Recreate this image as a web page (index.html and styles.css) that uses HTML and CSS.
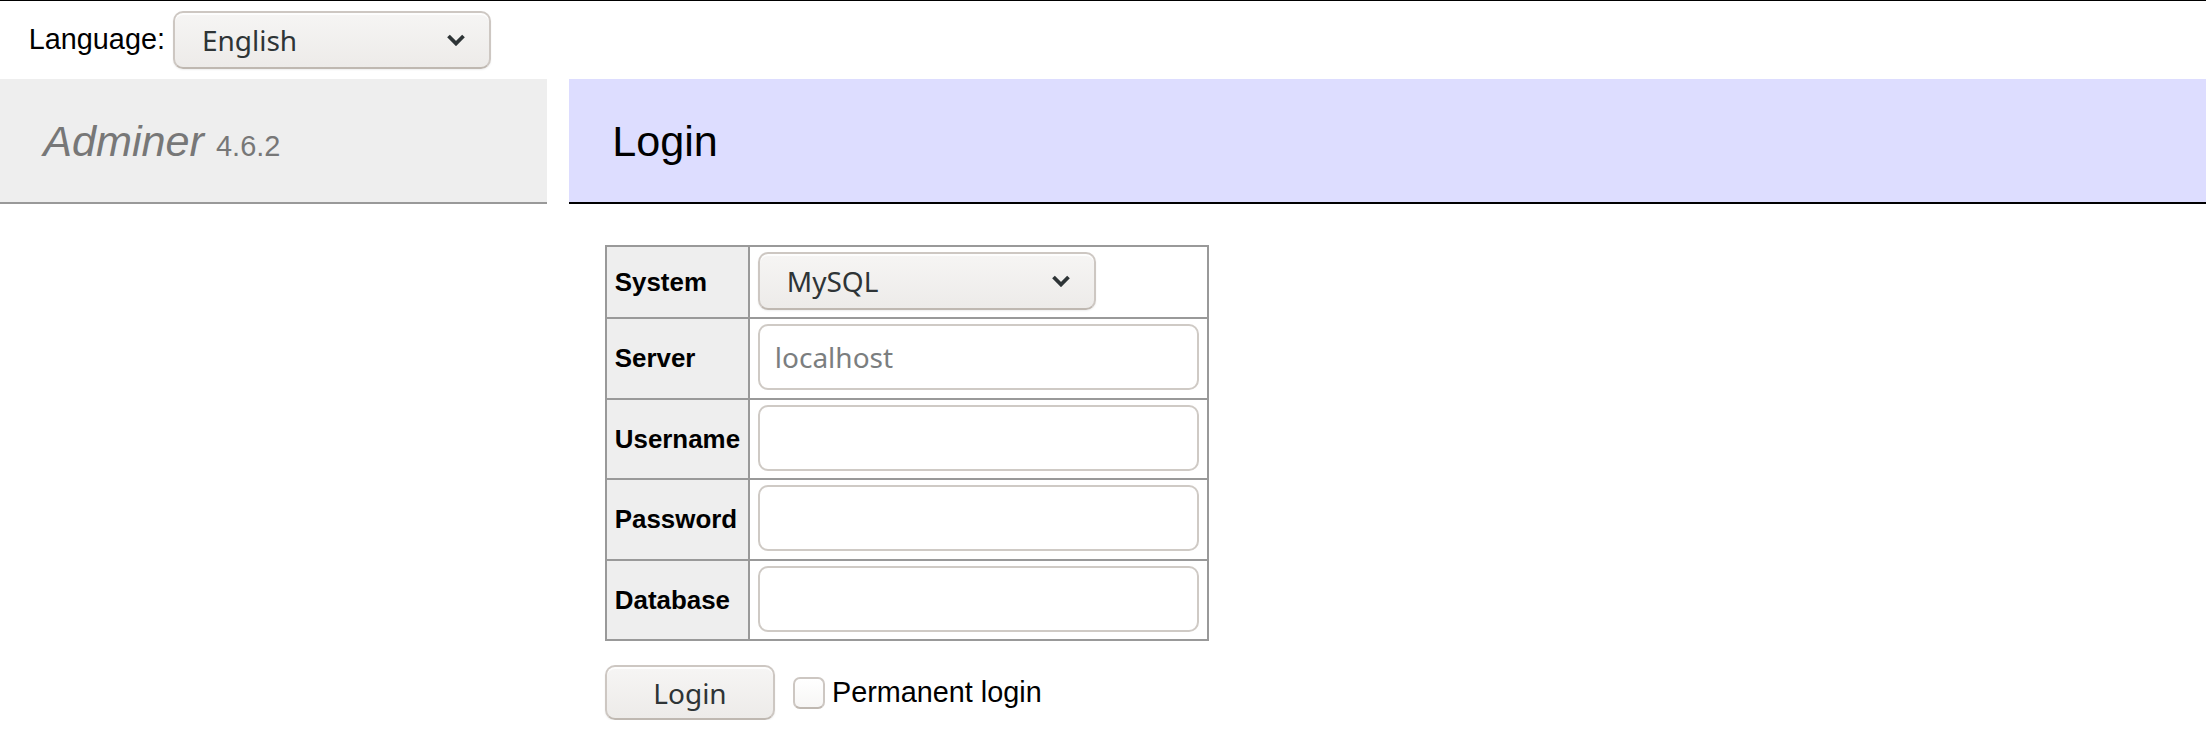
FILE: index.html
```html
<!DOCTYPE html>
<html lang="en">
<head>
<meta charset="utf-8">
<title>Login - Adminer</title>
<link rel="stylesheet" href="styles.css">
</head>
<body>
<div class="lang">
  <span class="lang-label">Language:</span>
  <span class="select-wrap select-lang">
    <select class="select"><option>English</option></select>
    <svg class="chevron" width="20" height="12" viewBox="0 0 20 12"><path d="M2.5 2 L10 9.5 L17.5 2"/></svg>
  </span>
</div>
<div class="main">
  <div class="menu">
    <h1><a class="brand" href="#">Adminer</a> <span class="version">4.6.2</span></h1>
  </div>
  <div class="content">
    <h2>Login</h2>
    <form class="login">
      <table class="layout">
        <tr>
          <th>System</th>
          <td class="cell-select">
            <span class="select-wrap select-system">
              <select class="select"><option>MySQL</option></select>
              <svg class="chevron" width="20" height="12" viewBox="0 0 20 12"><path d="M2.5 2 L10 9.5 L17.5 2"/></svg>
            </span>
          </td>
        </tr>
        <tr><th>Server</th><td><input class="field" type="text" placeholder="localhost"></td></tr>
        <tr><th>Username</th><td><input class="field" type="text"></td></tr>
        <tr><th>Password</th><td><input class="field" type="password"></td></tr>
        <tr><th>Database</th><td><input class="field" type="text"></td></tr>
      </table>
      <p class="actions">
        <input class="button" type="submit" value="Login">
        <label class="perm"><input class="check" type="checkbox">Permanent login</label>
      </p>
    </form>
  </div>
</div>
</body>
</html>
```

FILE: styles.css
```css
html, body {
  background: #fff;
}
body {
  margin: 0;
  border-top: 1px solid #000;
  color: #000;
  font-family: "Liberation Sans", Arial, sans-serif;
  font-size: 28.8px;
  line-height: 1.25;
}

.lang {
  height: 78px;
  box-sizing: border-box;
  padding: 10px 28.8px 0;
  display: flex;
  align-items: flex-start;
  gap: 8px;
}
.lang-label {
  height: 58px;
  display: flex;
  align-items: center;
}

.select-wrap {
  position: relative;
  display: block;
  width: fit-content;
}
.select {
  -webkit-appearance: none;
  appearance: none;
  display: block;
  margin: 0;
  height: 58px;
  box-sizing: border-box;
  padding: 0 0 0 27px;
  border: 2px solid #cdc7c2;
  border-bottom-color: #bfb8b1;
  border-radius: 10px;
  background: linear-gradient(to bottom, #f6f5f4, #edebe9);
  box-shadow: inset 0 2px 0 rgba(255, 255, 255, 0.8), 0 1px 2px rgba(0, 0, 0, 0.07);
  color: #2e3436;
  font-family: "Noto Sans", "Open Sans", sans-serif;
  font-size: 28px;
}
.select-lang .select {
  width: 318px;
}
.select-system .select {
  width: 338px;
}
.chevron {
  position: absolute;
  top: 50%;
  right: 25px;
  transform: translateY(-50%);
  pointer-events: none;
}
.chevron path {
  fill: none;
  stroke: #2e3436;
  stroke-width: 3.8;
}

.main {
  display: flex;
  align-items: flex-start;
}
.menu {
  width: 547px;
  flex: none;
}
h1 {
  margin: 0;
  padding: 34.56px 43.2px;
  font-size: 43.2px;
  line-height: 54px;
  font-weight: normal;
  color: #777;
  background: #eee;
  border-bottom: 2px solid #999;
}
.brand {
  color: #777;
  font-style: italic;
  text-decoration: none;
}
.version {
  color: #777;
  font-size: 67%;
  line-height: 1;
}

.content {
  flex: 1;
  margin-left: 22px;
}
h2 {
  margin: 0 0 41px;
  padding: 34.56px 43.2px;
  font-size: 43.2px;
  line-height: 54px;
  font-weight: normal;
  color: #000;
  background: #ddf;
  border-bottom: 2px solid #000;
}

.login {
  margin: 0;
  padding-left: 36px;
}
.layout {
  border-spacing: 0;
  border-top: 2px solid #999;
  border-left: 2px solid #999;
  font-size: 25.92px;
  line-height: 1.25;
}
.layout th,
.layout td {
  border-right: 2px solid #999;
  border-bottom: 2px solid #999;
  vertical-align: middle;
}
.layout th {
  background: #eee;
  text-align: left;
  font-weight: bold;
  padding: 0 7.78px;
}
.layout td {
  padding: 5px 8px 7.6px;
}
.layout .cell-select {
  padding-bottom: 7px;
}

.field {
  display: block;
  margin: 0;
  width: 441px;
  height: 66px;
  box-sizing: border-box;
  padding: 0 0 0 15px;
  border: 2px solid #cfcac5;
  border-radius: 10px;
  background: #fff;
  color: #2e3436;
  font-family: "Noto Sans", "Open Sans", sans-serif;
  font-size: 28px;
  outline: none;
}
.field::placeholder {
  color: #7b7e7f;
}

.actions {
  margin: 24px 0 0;
  display: flex;
  align-items: center;
}
.button {
  -webkit-appearance: none;
  appearance: none;
  margin: 0;
  width: 170px;
  height: 55px;
  box-sizing: border-box;
  padding: 0;
  border: 2px solid #cdc7c2;
  border-bottom-color: #bfb8b1;
  border-radius: 10px;
  background: linear-gradient(to bottom, #f6f5f4, #edebe9);
  box-shadow: inset 0 2px 0 rgba(255, 255, 255, 0.8), 0 1px 2px rgba(0, 0, 0, 0.07);
  color: #2e3436;
  font-family: "Noto Sans", "Open Sans", sans-serif;
  font-size: 28px;
}
.perm {
  display: flex;
  align-items: center;
  margin-left: 18px;
}
.check {
  -webkit-appearance: none;
  appearance: none;
  margin: 0 7px 0 0;
  width: 32px;
  height: 32px;
  box-sizing: border-box;
  border: 2px solid #cdc7c2;
  border-bottom-color: #bfb8b1;
  border-radius: 7px;
  background: linear-gradient(to bottom, #fff, #f7f6f5);
}
```
